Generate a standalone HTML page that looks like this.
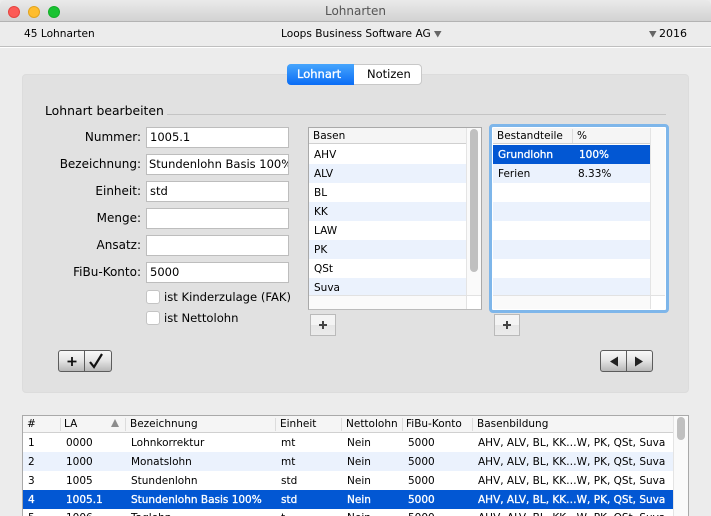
<!DOCTYPE html>
<html><head><meta charset="utf-8"><style>
*{box-sizing:border-box}
html{margin:0;padding:0;width:711px;height:516px;overflow:hidden}
body{margin:0;padding:0;width:711px;height:516px;overflow:hidden;position:relative;background:#ececec;font-family:"DejaVu Sans",sans-serif;color:#000;font-size:10.5px}
div,span.t{position:absolute}
.t{white-space:nowrap;line-height:14px;height:14px}
.l{font-size:12px;text-align:right;right:570px}
.f{left:146px;width:143px;background:#fff;border:1px solid #bdbdbd;font-size:11.5px;line-height:18px;padding-left:3px;white-space:nowrap;overflow:hidden}
.r{height:19px}
.blue{background:#ebf2fd}
.sel{background:#0257d3}
.w{color:#fff;-webkit-text-stroke:.3px #fff}
.h{background:#f5f5f5}
.d{width:1px;background:#dcdcdc}
.cb{left:146px;width:14px;height:14px;background:#fff;border:1px solid #c4c4c4;border-radius:3px}
.add{width:26px;height:22px;border:1px solid #bababa;background:linear-gradient(#f4f4f4 0,#f4f4f4 50%,#e6e6e6 50%,#ebebeb 100%)}
.btn{border:1px solid #5c5c5c;border-radius:3px;background:linear-gradient(#f8f8f8,#e6e6e6 45%,#b8b8b8)}
</style></head><body>
<div style="left:0;top:0;width:711px;height:22px;background:linear-gradient(#eaeaea,#d2d2d2);border-bottom:1px solid #b3b3b3;border-radius:5px 5px 0 0"></div>
<div style="left:8px;top:6px;width:12px;height:12px;border-radius:50%;background:#fc5b57;border:1px solid #e5453f"></div>
<div style="left:28px;top:6px;width:12px;height:12px;border-radius:50%;background:#ffbd2e;border:1px solid #e2a41f"></div>
<div style="left:48px;top:6px;width:12px;height:12px;border-radius:50%;background:#19c332;border:1px solid #14ae29"></div>
<span class="t" style="left:0;width:711px;text-align:center;top:4px;font-size:12px;color:#555">Lohnarten</span>
<div style="left:0;top:46px;width:711px;height:2px;background:linear-gradient(#bfbfbf 50%,#fff 50%)"></div>
<span class="t" style="left:24px;top:27px;font-size:10.6px">45 Lohnarten</span>
<span class="t" style="left:281px;top:27px;font-size:10.6px">Loops Business Software AG</span>
<svg style="position:absolute;left:434px;top:31px" width="8" height="7"><path d="M0 0h7.5L3.75 6.5z" fill="#666"/></svg>
<svg style="position:absolute;left:649px;top:31px" width="8" height="7"><path d="M0 0h7.5L3.75 6.5z" fill="#666"/></svg>
<span class="t" style="left:659px;top:27px;font-size:11px">2016</span>

<div style="left:22px;top:74px;width:667px;height:319px;background:#e1e1e1;border:1px solid #dcdcdc;border-radius:4px"></div>
<div style="left:287px;top:64px;width:135px;height:21px;border-radius:4px;background:#fff;border:1px solid #c8c8c8"></div>
<div style="left:287px;top:64px;width:67px;height:21px;border-radius:4px 0 0 4px;background:linear-gradient(#46a5fd,#0a6cf5)"></div>
<span class="t w" style="left:297px;top:67px;font-size:11.5px">Lohnart</span>
<span class="t" style="left:367px;top:67px;font-size:11.5px">Notizen</span>

<span class="t" style="left:45px;top:104px;font-size:12.4px">Lohnart bearbeiten</span>
<div style="left:167px;top:114px;width:499px;height:1px;background:#c4c4c4"></div>

<span class="t l" style="top:130px">Nummer:</span>
<span class="t l" style="top:157px">Bezeichnung:</span>
<span class="t l" style="top:184px">Einheit:</span>
<span class="t l" style="top:211px">Menge:</span>
<span class="t l" style="top:238px">Ansatz:</span>
<span class="t l" style="top:265px">FiBu-Konto:</span>
<div class="f" style="top:127px;height:21px">1005.1</div>
<div class="f" style="top:154px;height:21px;padding-left:2px">Stundenlohn Basis 100%</div>
<div class="f" style="top:181px;height:21px">std</div>
<div class="f" style="top:208px;height:21px"></div>
<div class="f" style="top:235px;height:21px"></div>
<div class="f" style="top:262px;height:21px">5000</div>
<div class="cb" style="top:290px"></div>
<div class="cb" style="top:311px"></div>
<span class="t" style="left:164px;top:290px;font-size:11.6px">ist Kinderzulage (FAK)</span>
<span class="t" style="left:164px;top:311px;font-size:11.6px">ist Nettolohn</span>

<div class="btn" style="left:58px;top:350px;width:54px;height:22px"></div>
<div style="left:84px;top:351px;width:1px;height:20px;background:#5c5c5c"></div>
<svg style="position:absolute;left:58px;top:350px" width="54" height="22"><path d="M14 7v9M9.5 11.5h9" stroke="#111" stroke-width="1.8" fill="none"/><path d="M32 12l4 5 8-13" stroke="#111" stroke-width="2.2" fill="none"/></svg>
<div class="btn" style="left:600px;top:350px;width:53px;height:22px"></div>
<div style="left:626px;top:351px;width:1px;height:20px;background:#5c5c5c"></div>
<svg style="position:absolute;left:600px;top:350px" width="53" height="22"><path d="M10 11.5l8-5v10zM43 11.5l-8-5v10z" fill="#222"/></svg>

<!-- Basen -->
<div style="left:308px;top:127px;width:174px;height:183px;background:#fff;border:1px solid #a9a9a9;border-bottom-color:#bbb"></div>
<div class="h" style="left:309px;top:128px;width:157px;height:16px;border-bottom:1px solid #d0d0d0"></div>
<span class="t" style="left:313px;top:129px">Basen</span>
<div class="r blue" style="left:309px;top:164px;width:157px"></div>
<div class="r blue" style="left:309px;top:202px;width:157px"></div>
<div class="r blue" style="left:309px;top:240px;width:157px"></div>
<div class="r blue" style="left:309px;top:278px;width:157px;height:17px"></div>
<span class="t" style="left:314px;top:148px">AHV</span>
<span class="t" style="left:314px;top:167px">ALV</span>
<span class="t" style="left:314px;top:186px">BL</span>
<span class="t" style="left:314px;top:205px">KK</span>
<span class="t" style="left:314px;top:224px">LAW</span>
<span class="t" style="left:314px;top:243px">PK</span>
<span class="t" style="left:314px;top:262px">QSt</span>
<span class="t" style="left:314px;top:281px">Suva</span>
<div style="left:466px;top:128px;width:15px;height:167px;background:#fafafa;border-left:1px solid #e4e4e4"></div>
<div style="left:470px;top:129px;width:8px;height:143px;border-radius:4px;background:#c0c0c0"></div>
<div style="left:309px;top:295px;width:172px;height:14px;background:#fafafa;border-top:1px solid #e2e2e2"></div>
<div style="left:466px;top:295px;width:15px;height:14px;background:#fff;border-left:1px solid #e2e2e2;border-top:1px solid #e2e2e2"></div>
<div class="add" style="left:310px;top:314px"></div>
<svg style="position:absolute;left:310px;top:314px" width="26" height="22"><path d="M13 7v8M9 11h8" stroke="#444" stroke-width="2"/></svg>

<!-- Bestandteile -->
<div style="left:489px;top:124px;width:180px;height:189px;background:#fff;border:3px solid #7eb6ea;border-radius:4px"></div>
<div class="h" style="left:493px;top:128px;width:157px;height:16px;border-bottom:1px solid #d0d0d0"></div>
<div class="d" style="left:572px;top:129px;height:14px"></div>
<span class="t" style="left:497px;top:129px">Bestandteile</span>
<span class="t" style="left:577px;top:129px">%</span>
<div class="r sel" style="left:493px;top:145px;width:157px"></div>
<div class="r blue" style="left:493px;top:164px;width:157px"></div>
<div class="r blue" style="left:493px;top:202px;width:157px"></div>
<div class="r blue" style="left:493px;top:240px;width:157px"></div>
<div class="r blue" style="left:493px;top:278px;width:157px;height:17px"></div>
<span class="t w" style="left:498px;top:148px">Grundlohn</span>
<span class="t w" style="left:579px;top:148px">100%</span>
<span class="t" style="left:498px;top:167px">Ferien</span>
<span class="t" style="left:578px;top:167px">8.33%</span>
<div style="left:650px;top:128px;width:15px;height:167px;background:#fafafa;border-left:1px solid #e4e4e4"></div>
<div style="left:493px;top:295px;width:172px;height:14px;background:#fafafa;border-top:1px solid #e2e2e2"></div>
<div style="left:650px;top:295px;width:15px;height:14px;background:#fff;border-left:1px solid #e2e2e2;border-top:1px solid #e2e2e2"></div>
<div class="add" style="left:494px;top:314px"></div>
<svg style="position:absolute;left:494px;top:314px" width="26" height="22"><path d="M13 7v8M9 11h8" stroke="#444" stroke-width="2"/></svg>

<!-- Main table -->
<div style="left:22px;top:415px;width:667px;height:101px;background:#fff;border:1px solid #a9a9a9;border-bottom:0"></div>
<div class="h" style="left:23px;top:416px;width:650px;height:17px;border-bottom:1px solid #d0d0d0"></div>
<div class="d" style="left:60px;top:418px;height:13px"></div>
<div class="d" style="left:125px;top:418px;height:13px"></div>
<div class="d" style="left:275px;top:418px;height:13px"></div>
<div class="d" style="left:341px;top:418px;height:13px"></div>
<div class="d" style="left:402px;top:418px;height:13px"></div>
<div class="d" style="left:472px;top:418px;height:13px"></div>
<svg style="position:absolute;left:110px;top:419px" width="10" height="9"><path d="M5 0l4 8H1z" fill="#8c8c8c"/></svg>
<span class="t" style="left:27px;top:417px">#</span>
<span class="t" style="left:64px;top:417px">LA</span>
<span class="t" style="left:130px;top:417px">Bezeichnung</span>
<span class="t" style="left:280px;top:417px">Einheit</span>
<span class="t" style="left:346px;top:417px">Nettolohn</span>
<span class="t" style="left:406px;top:417px">FiBu-Konto</span>
<span class="t" style="left:477px;top:417px">Basenbildung</span>

<div class="r blue" style="left:23px;top:452px;width:650px"></div>
<div class="r sel" style="left:23px;top:490px;width:650px"></div>
<div style="left:673px;top:416px;width:15px;height:100px;background:#fafafa;border-left:1px solid #e4e4e4"></div>
<div style="left:677px;top:417px;width:8px;height:23px;border-radius:4px;background:#c0c0c0"></div>

<span class="t" style="left:28px;top:436px">1</span><span class="t" style="left:66px;top:436px">0000</span><span class="t" style="left:131px;top:436px">Lohnkorrektur</span><span class="t" style="left:281px;top:436px">mt</span><span class="t" style="left:347px;top:436px">Nein</span><span class="t" style="left:408px;top:436px">5000</span><span class="t" style="left:478px;top:436px">AHV, ALV, BL, KK…W, PK, QSt, Suva</span>
<span class="t" style="left:28px;top:455px">2</span><span class="t" style="left:66px;top:455px">1000</span><span class="t" style="left:131px;top:455px">Monatslohn</span><span class="t" style="left:281px;top:455px">mt</span><span class="t" style="left:347px;top:455px">Nein</span><span class="t" style="left:408px;top:455px">5000</span><span class="t" style="left:478px;top:455px">AHV, ALV, BL, KK…W, PK, QSt, Suva</span>
<span class="t" style="left:28px;top:474px">3</span><span class="t" style="left:66px;top:474px">1005</span><span class="t" style="left:131px;top:474px">Stundenlohn</span><span class="t" style="left:281px;top:474px">std</span><span class="t" style="left:347px;top:474px">Nein</span><span class="t" style="left:408px;top:474px">5000</span><span class="t" style="left:478px;top:474px">AHV, ALV, BL, KK…W, PK, QSt, Suva</span>
<span class="t w" style="left:28px;top:493px">4</span><span class="t w" style="left:66px;top:493px">1005.1</span><span class="t w" style="left:131px;top:493px">Stundenlohn Basis 100%</span><span class="t w" style="left:281px;top:493px">std</span><span class="t w" style="left:347px;top:493px">Nein</span><span class="t w" style="left:408px;top:493px">5000</span><span class="t w" style="left:478px;top:493px">AHV, ALV, BL, KK…W, PK, QSt, Suva</span>
<span class="t" style="left:28px;top:511px">5</span><span class="t" style="left:66px;top:511px">1006</span><span class="t" style="left:131px;top:511px">Taglohn</span><span class="t" style="left:281px;top:511px">t</span><span class="t" style="left:347px;top:511px">Nein</span><span class="t" style="left:408px;top:511px">5000</span><span class="t" style="left:478px;top:511px">AHV, ALV, BL, KK…W, PK, QSt, Suva</span>
</body></html>
